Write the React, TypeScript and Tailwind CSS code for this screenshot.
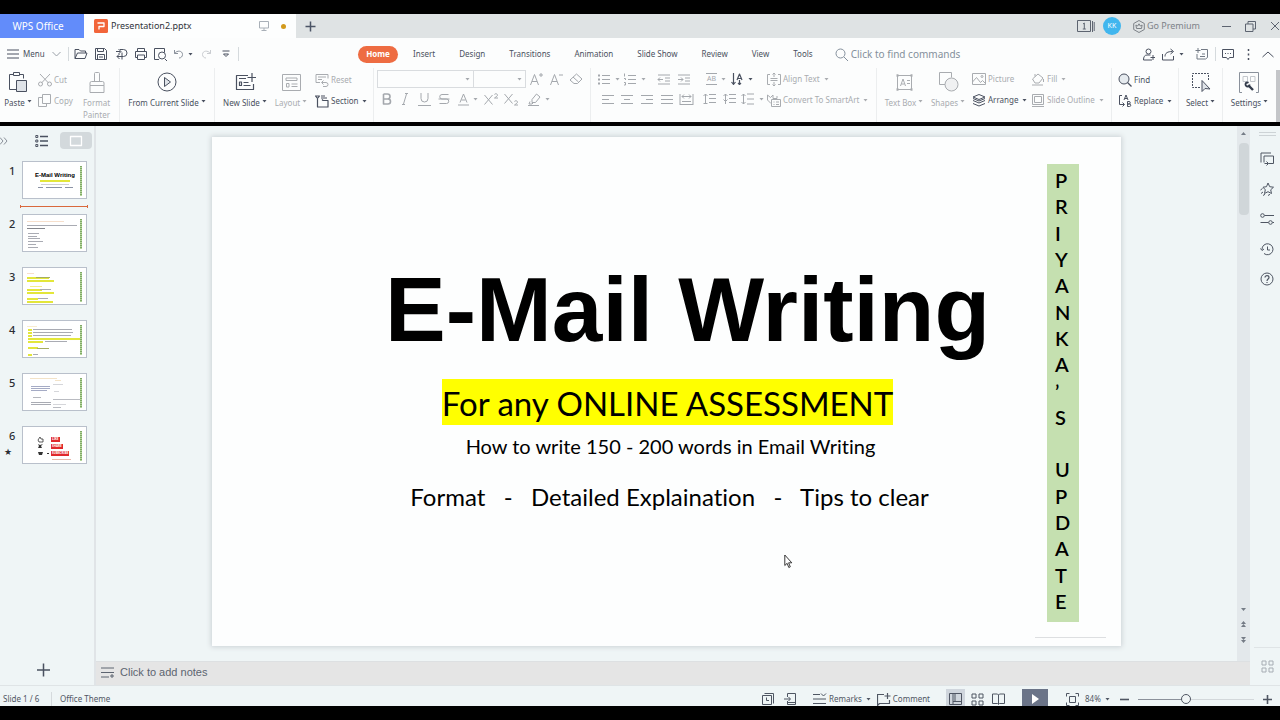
import { useState } from 'react'
import type { ReactNode } from 'react'

interface IconProps {
  w?: number
  h?: number
  children: ReactNode
}

function Icon({ w = 14, h = 14, children }: IconProps) {
  return (
    <svg
      width={w}
      height={h}
      viewBox={`0 0 ${w} ${h}`}
      fill="none"
      stroke="currentColor"
      strokeLinejoin="round"
      className="shrink-0"
      aria-hidden="true"
    >
      {children}
    </svg>
  )
}

function Caret() {
  return (
    <svg width="5" height="3" viewBox="0 0 5 3" fill="currentColor" className="shrink-0" aria-hidden="true">
      <path d="M0.5 0h4L2.5 2.5z" />
    </svg>
  )
}

interface ToolProps {
  label: string
  className?: string
  caret?: boolean
  children: ReactNode
}

function Tool({ label, className = 'w-5', caret, children }: ToolProps) {
  return (
    <button
      type="button"
      aria-label={label}
      title={label}
      className={`flex h-5 shrink-0 items-center justify-center gap-1 ${className}`}
    >
      {children}
      {caret && <Caret />}
    </button>
  )
}

interface TextToolProps {
  icon: ReactNode
  label: string
  caret?: boolean
  disabled?: boolean
}

function TextTool({ icon, label, caret, disabled }: TextToolProps) {
  return (
    <button
      type="button"
      disabled={disabled}
      className="flex h-5 shrink-0 items-center gap-0.5 whitespace-nowrap disabled:text-[#a9acb0]"
    >
      {icon}
      <span>{label}</span>
      {caret && <span className="pl-0.5"><Caret /></span>}
    </button>
  )
}

function BigTool({ icon, label, second, caret, disabled, className = '' }: TextToolProps & { second?: string; className?: string }) {
  return (
    <button
      type="button"
      disabled={disabled}
      className={`flex shrink-0 flex-col items-center whitespace-nowrap disabled:text-[#a9acb0] ${className}`}
    >
      <span className="flex h-7 items-center">{icon}</span>
      <span className="flex h-[14px] items-center gap-0.5">
        {label}
        {caret && <span className="pb-1"><Caret /></span>}
      </span>
      {second && <span className="leading-[10px]">{second}</span>}
    </button>
  )
}

function Divider() {
  return <span className="h-3.5 w-px shrink-0 bg-[#d5dadd]" />
}

const alignLines = {
  left: 'M1 1.5h12M1 5.5h7M1 9.5h12',
  center: 'M1 1.5h12M4 5.5h6M1 9.5h12',
  right: 'M1 1.5h12M6 5.5h7M1 9.5h12',
  justify: 'M1 1.5h12M1 5.5h12M1 9.5h12',
}

function TitleBar() {
  return (
    <header className="flex h-6 shrink-0 items-stretch bg-[#dfe3e4] text-[#5d6470]">
      <button type="button" className="w-21 shrink-0 bg-[#628cfa] pr-2 text-[10px] text-white">
        WPS Office
      </button>
      <div className="flex w-[212px] shrink-0 items-center bg-[#fdfefe] pl-[10px] pr-[10px]">
        <Icon w={14} h={14}>
          <rect width="14" height="14" rx="1.5" fill="#f2653a" stroke="none" />
          <path d="M3.500 4h6.500v3.500h-5v3" stroke="#fff" strokeWidth="1.300" />
        </Icon>
        <span className="pl-[3px] text-[9px] text-[#30343b]">Presentation2.pptx</span>
        <span className="ml-auto text-[#a9b0b8]">
          <Icon w={10} h={10}>
            <rect x="0.500" y="0.500" width="9" height="6.500" />
            <path d="M5 7v2M2.500 9.500h5" />
          </Icon>
        </span>
        <span className="ml-3 size-[5px] rounded-full bg-[#d29a1c]" />
      </div>
      <button type="button" aria-label="New tab" className="flex w-7 items-center justify-center text-[#4c5566]">
        <Icon w={11} h={11}>
          <path d="M5.500 0.500v10M0.500 5.500h10" strokeWidth="1.500" />
        </Icon>
      </button>
      <div className="ml-auto flex items-center">
        <button type="button" aria-label="Tab list">
          <Icon w={18} h={13}>
            <rect x="0.500" y="0.500" width="13" height="11" />
            <path d="M15.500 1v11M17.200 2v9M6 4l1.300-1v6M5.800 9h3" />
          </Icon>
        </button>
        <span className="ml-2 flex size-[18px] items-center justify-center rounded-full bg-[#41b6ee] text-[7px] text-white">
          KK
        </span>
        <span className="ml-2"><Divider /></span>
        <button type="button" className="ml-1 flex items-center gap-0.5 text-[9px] text-[#7d8288]">
          <Icon w={12} h={13}>
            <path d="M6 0.500l5.300 3v6L6 12.500l-5.300-3v-6z" />
            <path d="M3.500 8.500l-.6-3.500 1.800 1L6 3.800l1.300 2.200 1.800-1-.6 3.500z" />
          </Icon>
          <span>Go Premium</span>
        </button>
        <span className="ml-2"><Divider /></span>
        <button type="button" aria-label="Minimize" className="ml-3.5">
          <Icon w={9} h={9}><path d="M0 4.500h9" /></Icon>
        </button>
        <button type="button" aria-label="Restore" className="ml-3.5">
          <Icon w={11} h={11}>
            <rect x="0.500" y="3" width="7.500" height="7.500" />
            <path d="M3 3V0.500h7.500V8H8" />
          </Icon>
        </button>
        <button type="button" aria-label="Close" className="ml-3.5">
          <Icon w={10} h={10}><path d="M1 1l8 8M9 1L1 9" /></Icon>
        </button>
      </div>
    </header>
  )
}

const tabs = ['Insert', 'Design', 'Transitions', 'Animation', 'Slide Show', 'Review', 'View', 'Tools']

function MenuRow() {
  const [command, setCommand] = useState('')

  return (
    <div className="flex h-[30px] shrink-0 items-center pt-0.5 text-[8px] text-[#4a5160]">
      <button type="button" className="flex w-[68px] shrink-0 items-center gap-1 pl-[7px]">
        <Icon w={12} h={10}><path d="M0 1h12M0 5h12M0 9h12" /></Icon>
        <span>Menu</span>
        <span className="pl-[3px]"><Icon w={9} h={6}><path d="M0.500 1l4 4 4-4" stroke="#9aa0a8" /></Icon></span>
      </button>
      <Divider />
      <div className="flex w-[169px] shrink-0 items-center pl-[2px]">
        <Tool label="Open">
          <Icon w={14} h={12}><path d="M1 10.500V1.500h4l1.500 1.500h5v2M1 10.500l2.500-5.500h9.500l-2 5.500z" /></Icon>
        </Tool>
        <Tool label="Save">
          <Icon w={12} h={12}><path d="M0.500 0.500h9l2 2v9h-11zM2.500 0.500v3h6v-3M2.500 11.500v-5h7v5M4 9h4" /></Icon>
        </Tool>
        <Tool label="Export">
          <Icon w={13} h={13}><path d="M1 3.500h4.500M3.500 1L6 3.500 3.500 6M5 1.500h3.500a3.200 3.200 0 0 1 0 7H2M4.500 6L2 8.500 4.500 11M7 4.500v7" /></Icon>
        </Tool>
        <Tool label="Print" className="w-[19px]">
          <Icon w={12} h={12}><path d="M2.500 3.500v-3h7v3M2.500 9.500h-2v-6h11v6h-2M2.500 7h7v4.500h-7z" /></Icon>
        </Tool>
        <Tool label="Print preview">
          <Icon w={13} h={13}><path d="M5 11.500H0.500v-11h10v4M11 11l2 2" /><circle cx="8" cy="7.500" r="3.500" /></Icon>
        </Tool>
        <Tool label="Undo" caret className="w-[26px]">
          <Icon w={11} h={10}><path d="M1.500 1v3.500H5M1.500 4.500C4 1 9.500 1.500 9.500 5.500c0 2-1.500 3.500-3.500 3.500" stroke="#8a919b" /></Icon>
        </Tool>
        <Tool label="Redo">
          <Icon w={11} h={10}><path d="M9.500 1v3.500H6M9.500 4.500C7 1 1.500 1.500 1.500 5.500c0 2 1.500 3.500 3.500 3.500" stroke="#c9ccd0" /></Icon>
        </Tool>
        <Tool label="Customize toolbar">
          <Icon w={8} h={8}><path d="M0.500 1h7M1.500 4h5l-2.500 2.500z" /></Icon>
        </Tool>
      </div>
      <Divider />
      <nav className="ml-[119px] flex shrink-0 items-center">
        <button type="button" className="h-[17px] w-10 rounded-full bg-[#ee6c42] font-bold text-white">
          Home
        </button>
        <span className="w-[3px]" />
        {tabs.map((tab) => (
          <button key={tab} type="button" className="h-[17px] whitespace-nowrap px-3">
            {tab}
          </button>
        ))}
      </nav>
      <label className="ml-2.5 flex min-w-0 flex-1 items-center gap-[3px] text-[#84909c]">
        <Icon w={13} h={13}><circle cx="5.500" cy="5.500" r="4.500" /><path d="M9 9l4 4" /></Icon>
        <input
          type="text"
          aria-label="Find commands"
          value={command}
          onChange={(e) => setCommand(e.target.value)}
          placeholder="Click to find commands"
          className="w-full min-w-0 text-[10px] outline-none placeholder:text-[#84909c]"
        />
      </label>
      <div className="flex shrink-0 items-center">
        <Tool label="Collaborate" className="w-5">
          <Icon w={12} h={13}><circle cx="5.500" cy="3.500" r="2.500" /><path d="M7.500 7H4C1.500 7 0.500 9 0.500 12h8.500M10 7v5M7.500 9.500h5" /></Icon>
        </Tool>
        <Tool label="Share" caret className="w-7">
          <Icon w={13} h={13}><path d="M0.500 6v6h11V8M3 8.500c0-3.500 2.500-5 7.500-5M8.500 1l3 2.500-3 2.500" /></Icon>
        </Tool>
        <Tool label="Add note" className="w-7">
          <Icon w={13} h={12}><path d="M6 1.500h6.500v8l-2 1.500H2V6M3 0v5M0.500 2.500h5M5 8.500h5M7 6h3" stroke="#737a85" /></Icon>
        </Tool>
        <Divider />
        <Tool label="Feedback" className="w-6">
          <Icon w={12} h={11}><path d="M0.500 0.500h11v8H7.500L6 10.500 4.500 8.500h-4zM3 4.500h1M5.500 4.500h1M8 4.500h1" /></Icon>
        </Tool>
        <Tool label="More" className="w-4">
          <Icon w={3} h={11}><path d="M1.500 0v2M1.500 4.500v2M1.500 9v2" strokeWidth="1.500" /></Icon>
        </Tool>
        <Tool label="Collapse ribbon" className="w-6">
          <Icon w={12} h={7}><path d="M0.500 6L6 1l5.500 5" /></Icon>
        </Tool>
      </div>
    </div>
  )
}

function Ribbon() {
  return (
    <div className="flex h-[54px] shrink-0 items-stretch overflow-hidden text-[8px] text-[#4a5160] *:shrink-0">
      <div className="flex w-[120px] border-r border-[#eceeef] pl-0.5">
        <BigTool
          className="w-8"
          label="Paste"
          caret
          icon={
            <Icon w={20} h={20}>
              <path d="M5.500 2.500h-4v15h7M11.500 2.500h4v4M5.500 0.500h6v3h-6z" />
              <rect x="8.500" y="8.500" width="10" height="11" fill="#dfe3e8" />
            </Icon>
          }
        />
        <div className="flex w-11 flex-col gap-px pl-1 pt-0.5">
          <TextTool
            label="Cut"
            disabled
            icon={<Icon w={14} h={14}><path d="M2 1l8.500 9M12 1L3.500 10" /><circle cx="2.500" cy="11" r="2" /><circle cx="11.500" cy="11" r="2" /></Icon>}
          />
          <TextTool
            label="Copy"
            disabled
            icon={<Icon w={14} h={14}><path d="M4 3.500H0.500v9h8V10M4.500 0.500h8v9h-8z" /></Icon>}
          />
        </div>
        <BigTool
          className="w-[37px]"
          label="Format"
          second="Painter"
          disabled
          icon={<Icon w={16} h={21}><path d="M5.500 9.500v-8a1 1 0 0 1 1-1h3a1 1 0 0 1 1 1v8M1 13.500v-2.500a1.500 1.500 0 0 1 1.500-1.500h11a1.500 1.500 0 0 1 1.500 1.500v2.500zM1 13.500v7h14v-7" /></Icon>}
        />
      </div>

      <div className="flex w-[95px] justify-center border-r border-[#eceeef]">
        <BigTool
          label="From Current Slide"
          caret
          icon={<Icon w={20} h={20}><circle cx="10" cy="10" r="9" /><path d="M7.500 5.500v9l6-4.500z" fill="#dfe3e8" /></Icon>}
        />
      </div>

      <div className="flex w-[159px] border-r border-[#eceeef] pl-1">
        <BigTool
          className="w-[52px]"
          label="New Slide"
          caret
          icon={<Icon w={21} h={18}><path d="M13 2.500H1.500v14h17V11M17 0v9M12.500 4.500h9M4 5.500h7M8.500 9.500h5M8.500 12.500h7M4.500 9h2v3.500h-2z" strokeWidth="1.200" /></Icon>}
        />
        <BigTool
          className="ml-1 w-8"
          label="Layout"
          caret
          disabled
          icon={<Icon w={19} h={17}><path d="M0.500 0.500h18v16h-18zM4 4h11v2.500H4zM9.500 10h6M9.500 12.500h6M4.500 9.500h2.500v3.500H4.500z" /></Icon>}
        />
        <div className="flex flex-col gap-px pl-2 pt-0.5">
          <TextTool
            label="Reset"
            disabled
            icon={<Icon w={14} h={13}><path d="M5 8.500H1v-8h12v4M3 3h8M3 5.500h4M7 8.500h4a2 2 0 0 1 0 4H8M8.500 6.500l-2 2 2 2" /></Icon>}
          />
          <TextTool
            label="Section"
            caret
            icon={<Icon w={14} h={13}><path d="M0.500 1h4l-2 2.500zM6 1h4M6 3h6M2.500 4v8h10.500V5.500H8l-1-1" strokeWidth="1.200" /></Icon>}
          />
        </div>
      </div>

      <div className="flex w-[217px] flex-col border-r border-[#eceeef] pl-[3px] pt-0.5 text-[#a4a8ad]">
        <div className="flex h-[18px] items-center">
          <select aria-label="Font" className="h-[18px] w-[97px] appearance-none border border-[#d9dcdf]" />
          <span className="-ml-[9px] mr-1"><Caret /></span>
          <select aria-label="Font size" className="h-[18px] w-[52px] appearance-none border border-[#d9dcdf] border-l-0" />
          <span className="-ml-[9px] mr-[5px]"><Caret /></span>
          <Tool label="Grow font" className="w-[19px]"><Icon w={13} h={13}><path d="M0.500 12L4.500 1.500l4 10.500M2 8.500h5M11 0v4M9 2h4" /></Icon></Tool>
          <Tool label="Shrink font" className="w-5"><Icon w={13} h={13}><path d="M0.500 12L4.500 1.500l4 10.500M2 8.500h5M9 2h4" /></Icon></Tool>
          <Tool label="Clear formatting"><Icon w={14} h={12}><path d="M7.500 1L13 6l-4.500 4.500H5L1 7zM4 4l5.500 5" /></Icon></Tool>
        </div>
        <div className="flex h-[22px] items-center">
          <Tool label="Bold" className="w-[19px]"><Icon w={10} h={12}><path d="M1.500 1v10h4.500a2.500 2.500 0 0 0 0-5h-4.500M1.500 1h4a2.500 2.500 0 0 1 0 5" strokeWidth="1.600" /></Icon></Tool>
          <Tool label="Italic" className="w-[18px]"><Icon w={8} h={12}><path d="M5.500 1l-3 10M4 0.500h3M1 11.500h3" /></Icon></Tool>
          <Tool label="Underline"><Icon w={13} h={13}><path d="M3 0v5.500a3.500 3.500 0 0 0 7 0V0M0 12.500h13" /></Icon></Tool>
          <Tool label="Strikethrough"><Icon w={12} h={12}><path d="M10.500 1.500H4a2.200 2.200 0 0 0 0 4.500h4.500a2.200 2.200 0 0 1 0 4.500H1.500M0.500 6h11" /></Icon></Tool>
          <Tool label="Font color" caret className="w-[27px]"><Icon w={11} h={13}><path d="M2 9.500L5.500 1 9 9.500M3.500 7h4M0 12h11" /></Icon></Tool>
          <Tool label="Superscript"><Icon w={15} h={12}><path d="M0.500 2l8 9.500M8.500 2l-8 9.500M10.500 1.500c0-1 3-1 3 0.500 0 1-1 1.500-3 3h3.500" /></Icon></Tool>
          <Tool label="Subscript"><Icon w={15} h={13}><path d="M0.500 1l8 9.500M8.500 1l-8 9.500M10.500 8.500c0-1 3-1 3 0.500 0 1-1 1.500-3 3h3.500" /></Icon></Tool>
          <Tool label="Highlight" caret className="ml-1 w-7"><Icon w={13} h={13}><path d="M4 6.500L8.500 1l3.500 3-4.500 5.500H4zM2 8.500L1 11h3l1.500-1.500M0 12.500h11" /></Icon></Tool>
        </div>
      </div>

      <div className="flex w-[286px] border-r border-[#eceeef] text-[#a4a8ad]">
        <div className="flex w-[176px] flex-col pl-1 pt-px">
          <div className="flex">
            <Tool label="Bullets" caret className="w-[27px]"><Icon w={14} h={11}><path d="M5 1.500h8M5 5.500h8M5 9.500h8" /><path d="M1 1.500h2M1 5.500h2M1 9.500h2" strokeWidth="2" /></Icon></Tool>
            <Tool label="Numbering" caret className="w-6"><Icon w={14} h={13}><path d="M5 2.500h8M5 6.500h8M5 10.500h8M1.500 0.500v3M1 5.500h1.500v1.500M1 9.500h1.500v2.500H1" /></Icon></Tool>
            <Tool label="Decrease indent" className="ml-2 w-5"><Icon w={14} h={11}><path d="M1 1h12M8 4h5M8 7h5M1 10h12M1 5.500h5M3 3.500l-2 2 2 2" /></Icon></Tool>
            <Tool label="Increase indent" className="w-5"><Icon w={14} h={11}><path d="M1 1h12M8 4h5M8 7h5M1 10h12M1 5.500h5M4 3.500l2 2-2 2" /></Icon></Tool>
            <Tool label="Text direction" caret className="ml-2 w-7">
              <span className="border-y border-current px-px text-[7px] leading-[10px]">AB</span>
            </Tool>
            <Tool label="Sort text" caret className="w-6 text-[#4a5160]"><Icon w={13} h={12}><path d="M2.500 0v11M0.500 9l2 2.500 2-2.500M6 7l2.500-6 2.500 6M7 5.500h3M8.500 7v4.500M7 10l1.500 1.500L10 10" strokeWidth="1.200" /></Icon></Tool>
          </div>
          <div className="flex pl-[3px]">
            <Tool label="Align left" className="w-[19px]"><Icon w={14} h={11}><path d={alignLines.left} /></Icon></Tool>
            <Tool label="Align center"><Icon w={14} h={11}><path d={alignLines.center} /></Icon></Tool>
            <Tool label="Align right"><Icon w={14} h={11}><path d={alignLines.right} /></Icon></Tool>
            <Tool label="Justify" className="w-[19px]"><Icon w={14} h={11}><path d={alignLines.justify} /></Icon></Tool>
            <Tool label="Distribute"><Icon w={15} h={11}><path d="M1 0v11M14 0v11M3 2.500h9M5 0.500L3 2.500l2 2M10 0.500l2 2-2 2M3 7.500h9M1 10.500h13" /></Icon></Tool>
            <Tool label="Space before" className="ml-1 w-5"><Icon w={14} h={12}><path d="M6 1.500h7M6 5.500h7M6 9.500h7M2.500 1v10M0.500 3l2-2 2 2M0.500 10.500h4" /></Icon></Tool>
            <Tool label="Space after" className="w-5"><Icon w={14} h={12}><path d="M6 1.500h7M6 5.500h7M6 9.500h7M2.500 1v10M0.500 3l2-2 2 2M0.500 6.500l2 2 2-2" /></Icon></Tool>
            <Tool label="Line spacing" caret className="w-6"><Icon w={14} h={12}><path d="M6 1h7M6 6h7M6 11h7M2.500 1v10M0.500 3l2-2 2 2M0.500 9l2 2 2-2" /></Icon></Tool>
          </div>
        </div>
        <div className="flex flex-col gap-px pt-px">
          <TextTool
            label="Align Text"
            caret
            disabled
            icon={<Icon w={14} h={13}><path d="M3 1.500H0.500v10H3M11 1.500h2.500v10H11M7 0v4M5.500 1.500L7 0l1.500 1.500M3.500 5.500h7M3.500 7.500h7M7 9v4M5.500 11.500L7 13l1.500-1.500" /></Icon>}
          />
          <TextTool
            label="Convert To SmartArt"
            caret
            disabled
            icon={<Icon w={14} h={13}><path d="M4 9.500L0.500 6V1l3 2.500L6 1v3.500h4V2M4.500 5.500h9v7h-9zM6.500 8h1M9 8h3M6.500 10.500h1M9 10.500h3" /></Icon>}
          />
        </div>
      </div>

      <div className="flex w-[235px] border-r border-[#eceeef] pl-1.5">
        <BigTool
          className="w-[42px]"
          label="Text Box"
          caret
          disabled
          icon={<Icon w={19} h={19}><path d="M2.500 2.500h14v14h-14zM5.500 13L8 6l2.500 7M6.500 11h3M12 7.500h3M12 10.500h3" /><path d="M1.500 2.500h2M15.500 2.500h2M1.500 16.500h2M15.500 16.500h2" strokeWidth="2.500" /></Icon>}
        />
        <BigTool
          className="ml-[3px] w-10"
          label="Shapes"
          caret
          disabled
          icon={<Icon w={21} h={20}><path d="M7 12.500H1.500v-12h12v5" /><circle cx="13.500" cy="12.500" r="6.500" fill="#f0f1f2" /></Icon>}
        />
        <div className="flex w-[63px] flex-col gap-px pl-1 pt-px">
          <TextTool
            label="Picture"
            disabled
            icon={<Icon w={14} h={12}><path d="M0.500 0.500h13v11H0.500zM0.500 9l4-4.500 4 5 2-2 3 3" /><circle cx="10" cy="3.500" r="1" /></Icon>}
          />
          <TextTool
            label="Arrange"
            caret
            icon={<Icon w={14} h={13}><path d="M7 0.500l6 2.500-6 2.500L1 3zM1 6.500L7 9l6-2.500M1 9.500L7 12l6-2.500M1 4.500L7 7l6-2.500" /></Icon>}
          />
        </div>
        <div className="flex flex-col gap-px pt-px">
          <TextTool
            label="Fill"
            caret
            disabled
            icon={<Icon w={14} h={13}><path d="M7 1l5 4-4 5H4L1.500 6zM4 3.500V1M1 12h11M12.500 6v3" /></Icon>}
          />
          <TextTool
            label="Slide Outline"
            caret
            disabled
            icon={<Icon w={14} h={13}><path d="M1.500 0.500h11v10h-11zM3.500 2.500h7v6h-7zM1 12.500h12" /></Icon>}
          />
        </div>
      </div>

      <div className="flex w-[67px] flex-col gap-px border-r border-[#eceeef] pl-1.5 pt-0.5">
        <TextTool
          label="Find"
          icon={<Icon w={14} h={14}><circle cx="6" cy="6" r="5" fill="#e6ebef" /><path d="M9.500 9.500l4 4" strokeWidth="1.300" /></Icon>}
        />
        <TextTool
          label="Replace"
          caret
          icon={<Icon w={14} h={14}><path d="M4 1.500H1.500v9H6M4.500 8.500l2 2-2 2M6 6l2-5 2 5M7 4.500h2M9.500 7.500v5h2a1.200 1.200 0 0 0 0-2.500h-2 1.500a1.200 1.200 0 0 0 0-2.500z" /></Icon>}
        />
      </div>

      <div className="flex w-11 justify-center border-r border-[#eceeef]">
        <BigTool
          label="Select"
          caret
          icon={
            <Icon w={20} h={20}>
              <path d="M9 15.500H1.500v-14h16V8" strokeDasharray="2 1" />
              <path d="M11 8.500v11l3-3 5 .5z" fill="#dfe3e8" />
            </Icon>
          }
        />
      </div>
      <div className="flex w-[53px] justify-center">
        <BigTool
          label="Settings"
          caret
          icon={
            <Icon w={20} h={21}>
              <path d="M3 20.500H0.500v-20h19v20H17" stroke="#8a919b" />
              <path d="M4 4.500h4.500v5H4zM11.500 4.500H16v5h-4.500z" stroke="#c3c7cc" />
              <path d="M9.500 13.500l4.500 4.500" strokeWidth="2.400" stroke="#333b4b" />
              <circle cx="8.500" cy="12.500" r="2" strokeWidth="1.800" stroke="#333b4b" strokeDasharray="9.500 3" />
            </Icon>
          }
        />
      </div>
      <button type="button" aria-label="Scroll ribbon" className="ml-auto mt-0.5 w-1 bg-[#c4c6c9]" />
    </div>
  )
}

interface Bar {
  x: number
  y: number
  w: number
  c: string
}

const yellow = '#e3e63a'
const grey = '#a9abb3'

const thumbBars: Record<number, Bar[]> = {
  1: [
    { x: 17, y: 18, w: 30, c: yellow },
    { x: 18, y: 22, w: 28, c: '#d0d0d0' },
    { x: 15, y: 25, w: 5, c: '#8b93a5' },
    { x: 23, y: 25, w: 16, c: '#8b93a5' },
    { x: 42, y: 25, w: 8, c: '#8b93a5' },
  ],
  2: [
    { x: 4, y: 6, w: 37, c: '#f6dfcc' },
    { x: 4, y: 10, w: 50, c: grey },
    { x: 4, y: 13, w: 18, c: '#85878d' },
    { x: 5, y: 18, w: 11, c: grey },
    { x: 5, y: 21, w: 9, c: grey },
    { x: 5, y: 23, w: 12, c: grey },
    { x: 5, y: 26, w: 15, c: grey },
    { x: 5, y: 29, w: 8, c: grey },
    { x: 5, y: 32, w: 10, c: grey },
  ],
  3: [
    { x: 4, y: 5, w: 7, c: '#f6dfcc' },
    { x: 4, y: 9, w: 22, c: yellow },
    { x: 13, y: 9, w: 14, c: '#a5ad62' },
    { x: 4, y: 12, w: 27, c: yellow },
    { x: 7, y: 18, w: 12, c: '#f3ee8c' },
    { x: 4, y: 21, w: 15, c: yellow },
    { x: 17, y: 21, w: 11, c: grey },
    { x: 4, y: 24, w: 27, c: yellow },
    { x: 4, y: 30, w: 11, c: yellow },
    { x: 15, y: 30, w: 10, c: grey },
    { x: 4, y: 33, w: 26, c: yellow },
  ],
  4: [
    { x: 4, y: 5, w: 10, c: '#f8ecd0' },
    { x: 5, y: 8, w: 4, c: yellow },
    { x: 10, y: 8, w: 39, c: grey },
    { x: 5, y: 11, w: 4, c: yellow },
    { x: 10, y: 11, w: 40, c: grey },
    { x: 5, y: 14, w: 4, c: yellow },
    { x: 10, y: 14, w: 38, c: grey },
    { x: 5, y: 17, w: 52, c: yellow },
    { x: 5, y: 20, w: 15, c: yellow },
    { x: 22, y: 20, w: 22, c: grey },
    { x: 5, y: 26, w: 10, c: yellow },
    { x: 14, y: 27, w: 12, c: '#a5ad62' },
    { x: 5, y: 33, w: 4, c: yellow },
    { x: 10, y: 33, w: 5, c: grey },
  ],
  5: [
    { x: 7, y: 4, w: 27, c: '#f3e3c8' },
    { x: 32, y: 6, w: 6, c: '#f3e3c8' },
    { x: 8, y: 12, w: 19, c: '#a5abc5' },
    { x: 8, y: 14, w: 19, c: '#a5abc5' },
    { x: 8, y: 16, w: 16, c: '#a5abc5' },
    { x: 10, y: 23, w: 8, c: '#b5b7bd' },
    { x: 8, y: 28, w: 20, c: grey },
    { x: 8, y: 30, w: 20, c: grey },
    { x: 30, y: 10, w: 10, c: '#d5d6da' },
    { x: 31, y: 17, w: 5, c: '#d5d6da' },
    { x: 30, y: 25, w: 28, c: '#b9bbc1' },
    { x: 30, y: 30, w: 13, c: '#d5d6da' },
    { x: 30, y: 33, w: 8, c: '#b9bbc1' },
  ],
  6: [{ x: 29, y: 32, w: 19, c: '#e9b7a9' }],
}

function Thumbnail({ n }: { n: number }) {
  return (
    <button
      type="button"
      aria-label={`Slide ${n}`}
      className="relative h-[38px] w-[65px] shrink-0 overflow-hidden border border-[#b9c0cb] bg-white"
    >
      <svg width="63" height="36" viewBox="0 0 63 36" aria-hidden="true">
        {thumbBars[n].map((b, i) => (
          <rect key={i} x={b.x} y={b.y} width={b.w} height={b.c === yellow ? 2 : 1} fill={b.c} />
        ))}
        <path d="M58 4v30" stroke="#b5d79c" strokeWidth="2" />
        <path d="M58 4v30" stroke="#4c7a35" strokeDasharray="1 1" />
        {n === 6 && (
          <g fill="#333">
            <path d="M15 13l2-3 1 2h2v3h-4z" fill="none" stroke="#333" strokeWidth="0.800" />
            <path d="M15 17l2 1 3-1-2 2 1 2h-4l1-2z" />
            <path d="M15 25h5l-1 3h-3zM24 26h2v1h-2z" />
          </g>
        )}
      </svg>
      {n === 1 && (
        <span className="absolute left-3 top-2 whitespace-nowrap font-['Liberation_Sans',sans-serif] text-[6px] font-bold leading-[10px] text-black">
          E-Mail Writing
        </span>
      )}
      {n === 6 && (
        <span className="absolute left-7 top-2.5 flex flex-col items-start gap-0.5 text-[3px] font-bold leading-[5px] text-white *:bg-[#e0282c] *:px-px">
          <span>LIKE</span>
          <span>SHARE</span>
          <span>SUBSCRIBE</span>
        </span>
      )}
    </button>
  )
}

function SlidePanel() {
  return (
    <aside className="flex w-24 shrink-0 flex-col border-r-2 border-[#e0e4e7] text-[#4a5160]">
      <div className="flex items-center pt-1.5">
        <button type="button" aria-label="Collapse panel">
          <Icon w={8} h={8}><path d="M0 0.500L3 4 0 7.500M4 0.500L7 4 4 7.500" stroke="#8a9099" /></Icon>
        </button>
        <button type="button" aria-label="Outline" className="ml-[27px]">
          <Icon w={13} h={12}><path d="M5 1.500h8M5 6h8M5 10.500h8" strokeWidth="1.400" /><path d="M0.800 0.500h2v2h-2zM0.800 5h2v2h-2zM0.800 9.500h2v2h-2z" /></Icon>
        </button>
        <button type="button" aria-label="Slides" className="ml-3 flex h-[17px] w-8 items-center justify-center rounded-sm bg-[#d3d9dc] text-white">
          <Icon w={14} h={12}><path d="M1.500 1.500h11v9h-11z" strokeWidth="1.300" /></Icon>
        </button>
      </div>
      <ol className="flex flex-col gap-[15px] pt-3 text-[11px] leading-none text-[#2b2e34]">
        {[1, 2, 3, 4, 5, 6].map((n) => (
          <li key={n} className="relative flex pl-[9px]">
            <span className="w-[13px] shrink-0 pt-1 font-medium">{n}</span>
            <Thumbnail n={n} />
            {n === 1 && (
              <span className="absolute -bottom-[9px] left-5 flex h-[3px] w-[68px] items-center border-x border-[#d9683c]">
                <span className="h-px w-full bg-[#d9683c]" />
              </span>
            )}
            {n === 6 && <span className="absolute left-1 top-[21px] text-[9px]">★</span>}
          </li>
        ))}
      </ol>
      <button type="button" aria-label="Add slide" className="mb-2 ml-9 mt-auto w-4">
        <Icon w={15} h={14}><path d="M7.500 0.500v13M1 7h13" strokeWidth="1.500" /></Icon>
      </button>
    </aside>
  )
}

const banner = [...'PRIYANKA’S UPDATE']

function Slide() {
  return (
    <section className="flex min-h-0 flex-1 bg-[#fdfefe] text-black shadow-[0_0_5px_1px_#ccd2d5]">
      <div className="flex min-w-0 flex-1 flex-col items-center whitespace-pre pl-[88px] pt-[123px] font-['Lato','Liberation_Sans',sans-serif] [font-variant-ligatures:none]">
        <h1 className="pl-10 font-['Liberation_Sans',sans-serif] text-[91px] font-bold leading-[100px]">
          E-Mail Writing
        </h1>
        <p className="mt-[19px]">
          <mark className="block bg-[#ffff00] pt-0.5 text-[33px] leading-[44px] text-black">For any ONLINE ASSESSMENT</mark>
        </p>
        <p className="pl-1.5 text-[20px] leading-[42px]">How to write 150 - 200 words in Email Writing</p>
        <p className="pl-1 pt-2 text-[24px] leading-[44px]">Format   -   Detailed Explaination   -   Tips to clear</p>
      </div>
      <div className="mr-[15px] flex w-[71px] shrink-0 flex-col pt-[27px]">
        <div
          aria-label="PRIYANKA’S UPDATE"
          className="ml-3 flex w-8 flex-1 flex-col justify-between bg-[#c5e0b0] pb-2 pl-2 pt-[3px] font-['Lato','Liberation_Sans',sans-serif] text-[20px] font-semibold leading-[26px]"
        >
          {banner.map((letter, i) => (
            <span key={i} className="h-[26px]">{letter}</span>
          ))}
        </div>
        <span className="mb-2 mt-[15px] h-px bg-[#dddfe1]" />
      </div>
    </section>
  )
}

function ScrollBar() {
  return (
    <div className="flex w-[13px] shrink-0 flex-col items-center gap-2 bg-[#e3e8eb] pb-[18px] pt-1.5 text-[#757c86]">
      <Icon w={5} h={3}><path d="M0 3h5L2.500 0z" fill="currentColor" stroke="none" /></Icon>
      <span className="h-[72px] w-2.5 rounded-sm bg-[#d0d6d9]" />
      <div className="mt-auto flex flex-col gap-2.5">
        <Icon w={5} h={3}><path d="M0 0h5L2.500 3z" fill="currentColor" stroke="none" /></Icon>
        <Icon w={5} h={6}><path d="M0 3h5L2.500 0zM0 6h5L2.500 3z" fill="currentColor" stroke="none" /></Icon>
        <Icon w={5} h={6}><path d="M0 0h5L2.500 3zM0 3h5L2.500 6z" fill="currentColor" stroke="none" /></Icon>
      </div>
    </div>
  )
}

function SideBar() {
  return (
    <aside className="flex w-[30px] shrink-0 flex-col items-center pl-1 pt-1.5 text-[#4f5663]">
      <Icon w={17} h={4}><path d="M0 0.500h17M0 3.500h17" stroke="#cdd3d6" /></Icon>
      <div className="flex flex-col items-center gap-2.5 pt-[13px]">
        <Tool label="New object"><Icon w={14} h={14}><path d="M1 10.500V1h10M4 10.500V4h9.500v7.500H9M4.500 11.500h4M6.500 9.500l2 2-2 2" /></Icon></Tool>
        <Tool label="Animation"><Icon w={14} h={14}><path d="M8 1l1.700 3.700 3.800.5-2.800 2.600.8 3.700L8 9.700l-3.500 1.800.8-3.700L3 5.200l3.500-.5zM0.500 8l2-1.500M1 11.500l2-1.500M3 13.500l2-1.200M8 13.500l2-1.200" /></Icon></Tool>
        <Tool label="Properties"><Icon w={14} h={12}><circle cx="2.500" cy="2.500" r="1.800" /><path d="M4.500 2.500H14M0.500 9.500h8M12.500 9.500H14" /><circle cx="10.500" cy="9.500" r="1.800" /></Icon></Tool>
        <Tool label="History"><Icon w={14} h={14}><path d="M2 7.500a5.500 5.500 0 1 1 2 4M0.500 6.500l1.500 2 2-1.500M7.500 4.500v3.500h2.500" /></Icon></Tool>
        <Tool label="Help"><Icon w={14} h={14}><circle cx="7" cy="7" r="6" /><path d="M5 5.500c0-2.500 4-2.500 4 0C9 7 7 7 7 9M7 10v1" strokeWidth="1.200" /></Icon></Tool>
      </div>
      <div className="mt-auto flex h-[38px] w-full items-center justify-center border-t border-[#dfe4e6] text-[#a7adb4]">
        <Icon w={13} h={13}><path d="M1 1h4v4H1zM8 1h4v4H8zM1 8h4v4H1zM8 8h4v4H8z" /></Icon>
      </div>
    </aside>
  )
}

function StatusBar() {
  const [zoom, setZoom] = useState(41)

  return (
    <footer className="flex h-[21px] shrink-0 items-center overflow-hidden border-t border-[#dfe4e6] pt-1.5 text-[8px] text-[#4f5663]">
      <span className="w-[51px] pl-[3px]">Slide 1 / 6</span>
      <Divider />
      <span className="pl-2">Office Theme</span>
      <div className="ml-auto flex items-center">
        <Tool label="Recent" className="w-[22px]"><Icon w={12} h={12}><path d="M2.500 0.500h9v10M0.500 2.500h9v9h-9zM4.500 4.500v3h2.500" /></Icon></Tool>
        <Tool label="Exit" className="w-[22px]"><Icon w={12} h={12}><path d="M3.500 4V0.500h8v11h-8V8M0 6h6M4.500 4l2 2-2 2M3.500 9.500h8" /></Icon></Tool>
        <span className="ml-1"><Divider /></span>
        <button type="button" className="ml-2 flex items-center gap-0.5">
          <Icon w={14} h={12}><path d="M0 1.500h7M8 0.500l2.500 2.500L13 0.500M0 6h13M0 10.500h13" /></Icon>
          <span>Remarks</span>
          <span className="pl-0.5"><Caret /></span>
        </button>
        <button type="button" className="ml-1.5 flex items-center gap-0.5">
          <Icon w={14} h={13}><path d="M7 1.500H0.500v11l2-2h10V7M10.500 0v6M7.500 3h6" strokeWidth="1.200" /></Icon>
          <span>Comment</span>
        </button>
        <span className="ml-2.5"><Divider /></span>
        <span className="ml-1.5 flex items-center">
          <Tool label="Normal view" className="w-[19px] bg-[#d0d6dd]"><Icon w={13} h={12}><path d="M0.500 0.500h12v11h-12zM4 0.500v11M6 0.500v8h6.500M4 8.500h8" /></Icon></Tool>
          <Tool label="Slide sorter" className="w-6"><Icon w={13} h={13}><path d="M1 1h4v4H1zM8 1h4v4H8zM1 8h4v4H1zM8 8h4v4H8z" /></Icon></Tool>
          <Tool label="Reading view" className="w-[19px]"><Icon w={13} h={12}><path d="M0.500 1h5l1 1 1-1h5v9.500h-5l-1 1-1-1h-5zM6.500 2v9" /></Icon></Tool>
        </span>
        <span className="ml-2"><Divider /></span>
        <button type="button" aria-label="Play slide show" className="ml-1.5 flex h-5 w-[26px] items-center justify-center bg-[#6b7488] text-white">
          <Icon w={9} h={10}><path d="M1 0v10l7-5z" fill="currentColor" stroke="none" /></Icon>
        </button>
        <span className="ml-1.5"><Divider /></span>
        <Tool label="Fit to window" className="ml-2 w-5 pl-px"><Icon w={13} h={13}><path d="M0.500 3.500v-3h3M9.500 0.500h3v3M12.500 9.500v3h-3M3.500 12.500h-3v-3M3.500 3.500h6v6h-6z" /></Icon></Tool>
        <button type="button" className="flex w-[38px] items-center gap-1 pl-[3px]">
          84% <Caret />
        </button>
        <button type="button" aria-label="Zoom out"><Icon w={9} h={3}><path d="M0 1.500h9" strokeWidth="1.600" /></Icon></button>
        <input
          type="range"
          aria-label="Zoom"
          value={zoom}
          onChange={(e) => setZoom(Number(e.target.value))}
          className="mx-[9px] h-px w-[116px] appearance-none bg-linear-to-r from-[#8b919b] from-41% to-[#d3d8db] to-41% [&::-webkit-slider-thumb]:size-2.5 [&::-webkit-slider-thumb]:appearance-none [&::-webkit-slider-thumb]:rounded-full [&::-webkit-slider-thumb]:border [&::-webkit-slider-thumb]:border-[#4f5663] [&::-webkit-slider-thumb]:bg-[#f0f5f6]"
        />
        <button type="button" aria-label="Zoom in" className="mr-2"><Icon w={9} h={9}><path d="M4.500 0v9M0 4.500h9" strokeWidth="1.600" /></Icon></button>
      </div>
    </footer>
  )
}

export default function App() {
  return (
    <div className="relative flex h-screen flex-col overflow-hidden bg-black pb-3.5 pt-3.5 font-['Noto_Sans','Open_Sans',sans-serif]">
      <TitleBar />
      <div className="shrink-0 border-b-4 border-black bg-[#fcfdfd]">
        <MenuRow />
        <Ribbon />
      </div>
      <div className="flex min-h-0 flex-1 bg-[#eff5f6]">
        <SlidePanel />
        <div className="flex min-w-0 flex-1 flex-col">
          <main className="flex min-h-0 flex-1">
            <div className="flex min-w-0 flex-1 flex-col px-[116px] pb-[15px] pt-[11px]">
              <Slide />
            </div>
            <ScrollBar />
          </main>
          <button
            type="button"
            className="flex h-6 shrink-0 items-center gap-[5px] border-t border-[#dde0e2] bg-[#e5e5e5] pb-0.5 pl-[5px] font-['Liberation_Sans',sans-serif] text-[11px] text-[#5c6470]"
          >
            <Icon w={14} h={11}><path d="M0 1h13M0 5.500h13M0 10h8M11 7v4M9 9h4" /></Icon>
            Click to add notes
          </button>
        </div>
        <SideBar />
      </div>
      <div className="shrink-0 bg-[#eff5f6]">
        <StatusBar />
      </div>
      <svg
        width="9"
        height="15"
        viewBox="0 0 9 15"
        className="pointer-events-none absolute left-[784px] top-[554px]"
        fill="#fff"
        stroke="#222"
        aria-hidden="true"
      >
        <path d="M0.800 1v10.500l2.300-2.200 1.700 4.200 1.500-.7-1.700-4h3.200z" strokeWidth="0.900" />
      </svg>
    </div>
  )
}
